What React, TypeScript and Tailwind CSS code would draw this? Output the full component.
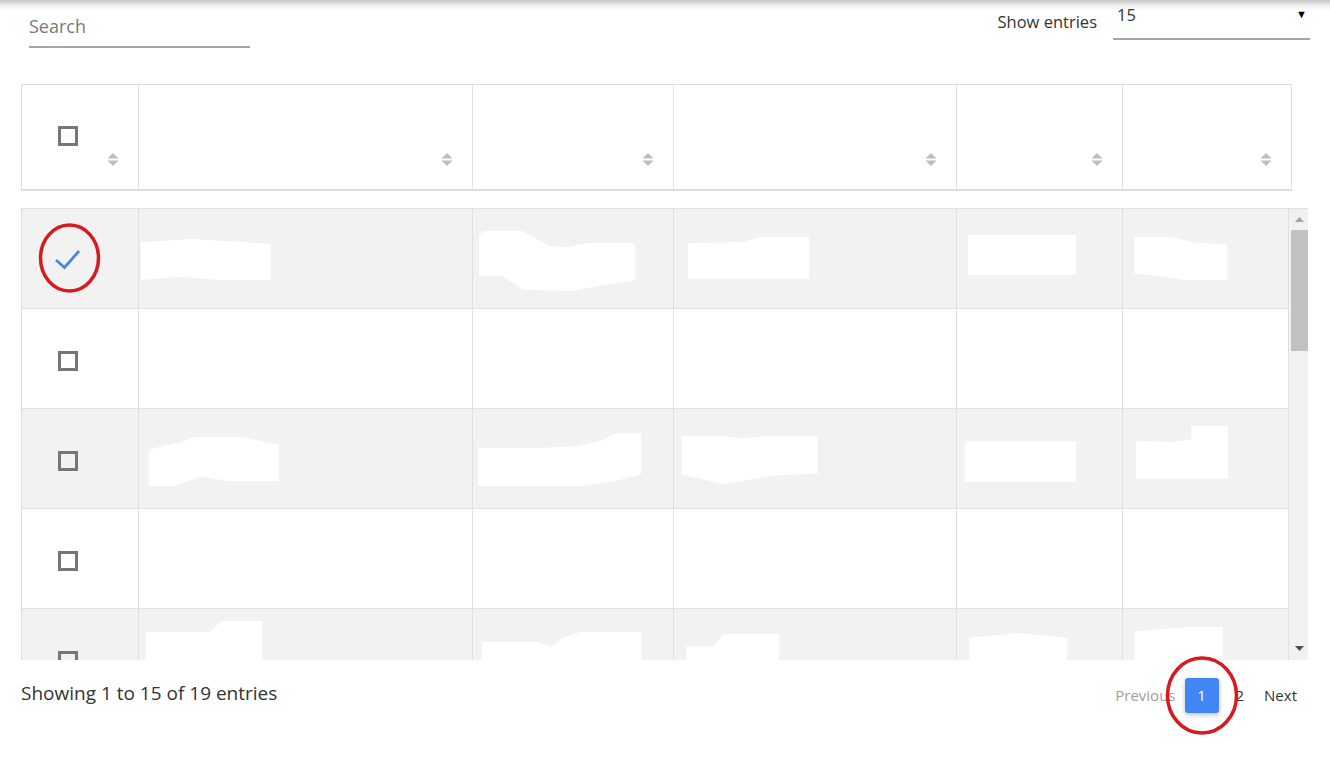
import React from "react";

type Blob = { l: number; t: number; w: number; h: number; clip?: string };

const headWidths = [117, 335, 201, 283, 167, 168];
const bodyWidths = [117, 334, 201, 283, 166, 166];

// redaction blobs per row (offsets relative to cell), null row = empty
const rows: (Blob[] | null)[] = [
  [
    { l: 2, t: 30, w: 130, h: 41, clip: "polygon(0 8%,40% 0,100% 12%,100% 100%,60% 100%,30% 92%,0 100%)" },
    { l: 6, t: 22, w: 156, h: 60, clip: "polygon(3% 0,28% 0,45% 25%,56% 27%,70% 20%,100% 20%,100% 82%,80% 90%,60% 100%,28% 98%,15% 75%,0 75%,0 8%)" },
    { l: 14, t: 28, w: 121, h: 42, clip: "polygon(0 15%,45% 12%,60% 0,100% 0,100% 100%,0 100%)" },
    { l: 11, t: 26, w: 108, h: 40 },
    { l: 11, t: 28, w: 93, h: 43, clip: "polygon(0 0,40% 0,65% 12%,100% 18%,100% 100%,55% 100%,25% 90%,0 85%)" },
  ],
  null,
  [
    { l: 10, t: 28, w: 130, h: 49, clip: "polygon(0 25%,25% 10%,35% 0,70% 0,100% 15%,100% 90%,60% 90%,40% 80%,20% 100%,0 100%)" },
    { l: 5, t: 24, w: 163, h: 53, clip: "polygon(0 28%,40% 28%,60% 25%,75% 15%,85% 0,100% 0,100% 78%,85% 90%,65% 100%,0 100%)" },
    { l: 8, t: 27, w: 136, h: 48, clip: "polygon(0 0,30% 0,45% 5%,60% 0,100% 0,100% 78%,70% 82%,30% 100%,0 80%)" },
    { l: 8, t: 32, w: 111, h: 41 },
    { l: 13, t: 17, w: 92, h: 53, clip: "polygon(0 28%,40% 30%,60% 25%,60% 0,100% 0,100% 100%,0 100%)" },
  ],
  null,
  [
    { l: 7, t: 12, w: 116, h: 44, clip: "polygon(0 25%,55% 25%,65% 0,100% 0,100% 100%,0 100%)" },
    { l: 9, t: 23, w: 159, h: 33, clip: "polygon(0 30%,35% 30%,43% 45%,52% 15%,62% 0,100% 0,100% 100%,0 100%)" },
    { l: 12, t: 25, w: 93, h: 31, clip: "polygon(0 40%,30% 40%,40% 0,100% 0,100% 100%,0 100%)" },
    { l: 12, t: 24, w: 98, h: 32, clip: "polygon(0 15%,50% 0,100% 15%,100% 100%,0 100%)" },
    { l: 12, t: 18, w: 88, h: 38, clip: "polygon(0 12%,60% 0,100% 0,100% 100%,0 100%)" },
  ],
];

function Checkbox() {
  return <div className="w-[20px] h-[20px] border-[3px] border-[#777777] bg-transparent" />;
}

function SortIcon() {
  return (
    <svg width="12" height="13" viewBox="0 0 12 13">
      <path d="M6 0 L11.5 5.5 L0.5 5.5 Z" fill="#bdbdbd" />
      <path d="M0.5 7.5 L11.5 7.5 L6 13 Z" fill="#bdbdbd" />
    </svg>
  );
}

export default function App() {
  return (
    <div className="relative w-[1330px] h-[770px] bg-white overflow-hidden font-['Open_Sans','Noto_Sans',sans-serif] text-[#333333]">
      {/* navbar shadow */}
      <div className="absolute top-0 left-0 right-0 h-[10px] bg-gradient-to-b from-[#c4c4c4] via-[#ececec] to-white" />

      <div className="px-[21px]">
        {/* Top controls */}
        <div className="flex justify-between items-start pr-0">
          <div className="ml-[8px] mt-[13px] w-[221px] pb-[7px] border-b-2 border-[#a6a6a6]">
            <span className="text-[18px] leading-[26px] text-[#7a7a7a]">Search</span>
          </div>
          <div className="flex items-start -mr-[1px]">
            <span className="mt-[10px] text-[16.5px] leading-[24px] text-[#333333]">Show entries</span>
            <div className="relative ml-[16px] mt-[3px] w-[197px] h-[37px] border-b-2 border-[#a6a6a6]">
              <span className="ml-[4px] text-[16.5px] leading-[24px] text-[#333333]">15</span>
              <span className="absolute right-[3px] top-[3px] text-[11px] text-black">▼</span>
            </div>
          </div>
        </div>

        {/* Header table */}
        <div className="mt-[36px] flex w-[1271px] h-[107px] border border-[#e0e0e0] border-b-2 border-b-[#dcdcdc]">
          {headWidths.map((w, i) => (
            <div
              key={i}
              style={{ width: w }}
              className="relative h-full border-r border-[#e0e0e0] last:border-r-0 flex"
            >
              {i === 0 && (
                <div className="ml-[36px] mt-[41px]">
                  <Checkbox />
                </div>
              )}
              <div className="absolute right-[19px] top-[68px]">
                <SortIcon />
              </div>
            </div>
          ))}
        </div>

        {/* Body */}
        <div className="mt-[17px] flex w-[1287px] h-[452px] overflow-hidden border-t border-[#e0e0e0]">
          <div className="w-[1267px] border-l border-[#e0e0e0]">
            {rows.map((cells, r) => (
              <div
                key={r}
                className={`flex h-[100px] border-b border-[#e0e0e0] ${r % 2 === 0 ? "bg-[#f2f2f2]" : "bg-white"}`}
              >
                {bodyWidths.map((w, c) => (
                  <div
                    key={c}
                    style={{ width: w }}
                    className="relative h-full border-r border-[#e0e0e0] shrink-0"
                  >
                    {c === 0 && r !== 0 && (
                      <div className="ml-[36px] mt-[42px]">
                        <Checkbox />
                      </div>
                    )}
                    {c === 0 && r === 0 && (
                      <svg className="ml-[31px] mt-[38px]" width="30" height="24" viewBox="0 0 30 24">
                        <path d="M3 13 L11.5 20.5 L26 4" fill="none" stroke="#4a86e0" strokeWidth="2.8" />
                      </svg>
                    )}
                    {c > 0 && cells && cells[c - 1] && (
                      <div
                        className="absolute bg-white"
                        style={{
                          left: cells[c - 1].l,
                          top: cells[c - 1].t,
                          width: cells[c - 1].w,
                          height: cells[c - 1].h,
                          clipPath: cells[c - 1].clip,
                        }}
                      />
                    )}
                  </div>
                ))}
              </div>
            ))}
          </div>
          {/* scrollbar */}
          <div className="w-[20px] h-full bg-[#f1f1f1] flex flex-col items-end">
            <div className="w-[17px] h-[21px] flex items-center justify-center">
              <svg width="9" height="5" viewBox="0 0 9 5">
                <path d="M4.5 0 L9 5 L0 5 Z" fill="#a3a3a3" />
              </svg>
            </div>
            <div className="w-[17px] h-[121px] bg-[#c1c1c1]" />
            <div className="flex-1" />
            <div className="w-[17px] h-[22px] flex items-start justify-center pt-[8px]">
              <svg width="9" height="5" viewBox="0 0 9 5">
                <path d="M0 0 L9 0 L4.5 5 Z" fill="#505050" />
              </svg>
            </div>
          </div>
        </div>

        {/* Footer */}
        <div className="flex justify-between items-center h-[70px]">
          <span className="-mt-[4px] text-[19px] text-[#333333]">Showing 1 to 15 of 19 entries</span>
          <div className="flex items-center mr-[12px]">
            <span className="text-[15px] text-[#9e9e9e]">Previous</span>
            <div className="ml-[9px] w-[34px] h-[35px] rounded-[3px] bg-[#4285f4] shadow-[0_2px_5px_rgba(0,0,0,0.25)] flex items-center justify-center text-[15px] text-white">
              1
            </div>
            <span className="ml-[17px] text-[15px] text-[#333333]">2</span>
            <span className="ml-[20px] text-[15px] text-[#333333]">Next</span>
          </div>
        </div>
      </div>

      {/* red annotation circles */}
      <svg className="absolute left-0 top-0 pointer-events-none" width="1330" height="770">
        <ellipse cx="69.5" cy="258" rx="29" ry="33" fill="none" stroke="#d81920" strokeWidth="3.5" />
        <ellipse cx="1202" cy="695.5" rx="34.5" ry="37.5" fill="none" stroke="#d81920" strokeWidth="3.5" />
      </svg>
    </div>
  );
}
